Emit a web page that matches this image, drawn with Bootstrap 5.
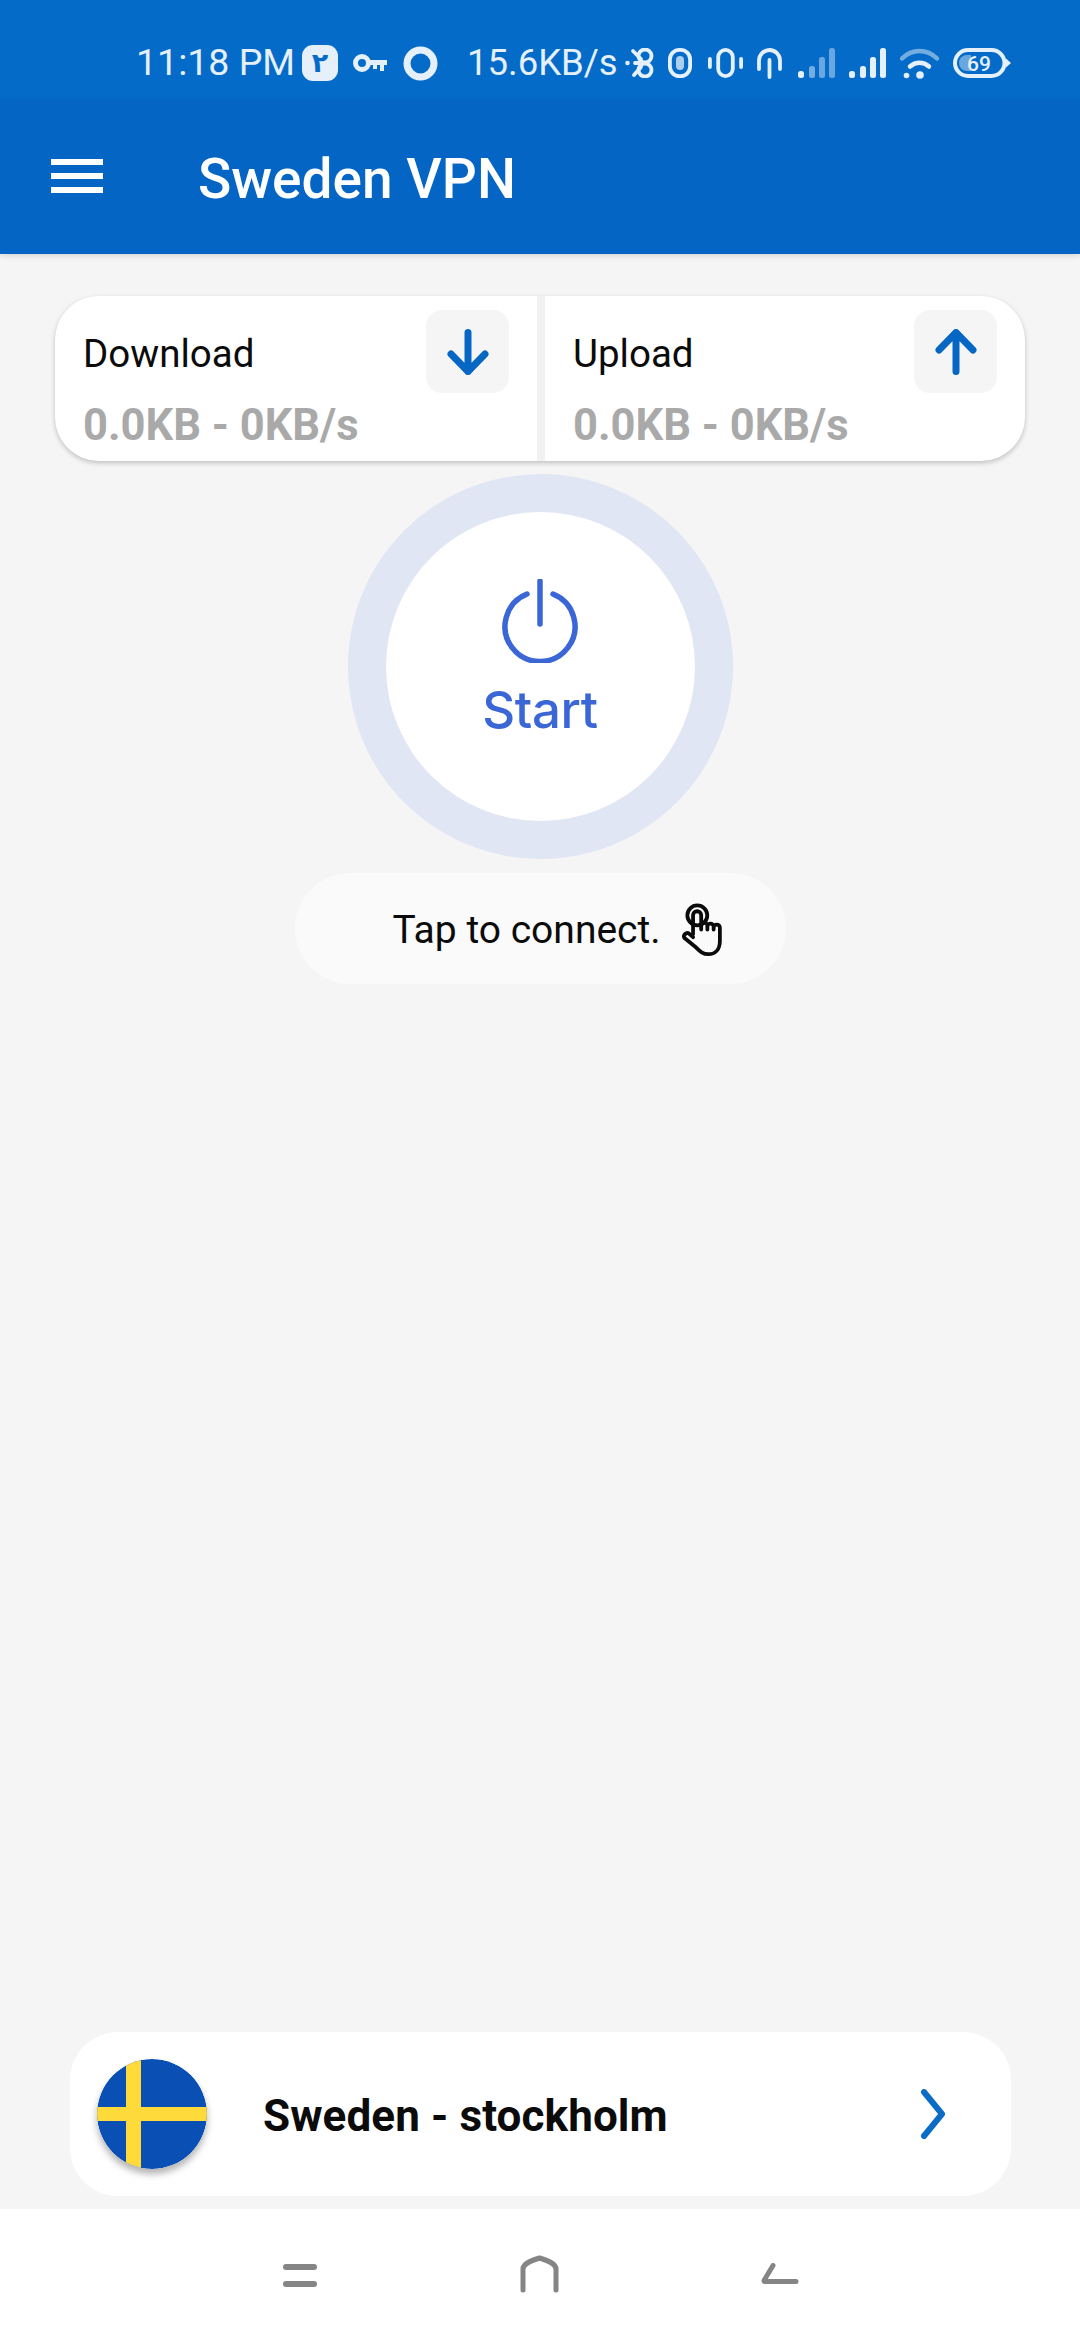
<!DOCTYPE html>
<html lang="en">
<head>
<meta charset="utf-8">
<title>Sweden VPN</title>
<link href="https://cdn.jsdelivr.net/npm/bootstrap@5.3.0/dist/css/bootstrap.min.css" rel="stylesheet">
<style>
html,body{margin:0;height:100%}
body{width:1080px;height:2340px;background:#f5f5f5;font-family:Roboto,"Liberation Sans",sans-serif;color:#0b0b0b;overflow:hidden}
.app-shell{height:2340px}
.status-strip{height:100px;background:#046bc9;padding-left:136px;padding-top:26px;color:#e6f0fa;font-size:37.5px;line-height:1}
.status-strip svg{flex:none;display:block}
.st-time{width:166px;white-space:nowrap}
.st-badge{width:36px;height:36px;border-radius:11px;background:#e6f0fa;color:#046bc9;font:700 27px/36px "DejaVu Sans",sans-serif;text-align:center}
.ms-15{margin-left:15px}.ms-16{margin-left:16px}.ms-14{margin-left:14px}.ms-29{margin-left:29px}.ms-8{margin-left:8px}.ms-20{margin-left:20px}
.st-speed{white-space:nowrap;width:150px;font-size:36.5px}
.app-bar{height:154px;background:#0465c4;color:#fff;padding-left:51px;box-shadow:0 2px 6px rgba(0,0,0,.12);position:relative}
.app-title{font-size:55px;font-weight:500;margin-left:95px;line-height:1;margin-top:5px}
.burger{width:52px;display:flex;flex-direction:column;gap:8px;margin-bottom:2px}
.burger span{display:block;height:6px;background:#fff}
.main-pane{padding-top:42px;min-height:0}
.stats-box{margin:0 55px;height:165px;border-radius:44px;background:#fff;box-shadow:0 2px 5px rgba(0,0,0,.22);overflow:hidden}
.stat-cell{width:482px;padding:14px 28px 0 28px;flex:none}
.stat-cell+.stat-cell{border-left:8px solid #f1f1f1;padding-left:28px;width:488px}
.stat-name{font-size:38.5px;line-height:1;padding-top:25px}
.stat-icon{width:83px;height:83px;background:#f5f5f5;border-radius:16px}
.stat-val{font-size:43.5px;line-height:1;font-weight:700;color:#a9a9a9;white-space:nowrap;margin-top:11px}
.ring-outer{width:385px;height:385px;border-radius:50%;background:#e0e6f3;margin:13px auto 0}
.ring-inner{width:309px;height:309px;border-radius:50%;background:#fff;color:#3b66d6;padding-top:67px}
.start-txt{font-family:Inter,Roboto,sans-serif;font-size:51px;font-weight:500;line-height:1;margin-top:21px;letter-spacing:-.4px}
.tap-pill{width:491px;height:111px;border-radius:56px;background:#fafafa;margin:14px auto 0;font-size:39px;padding-left:98px;padding-top:3px;white-space:nowrap}
.place-box{margin:auto 69px 13px 70px;height:164px;border-radius:48px;background:#fff;padding-left:27px;padding-right:65px}
.flag-disc{width:110px;height:110px;border-radius:50%;box-shadow:0 5px 7px rgba(0,0,0,.3);flex:none;display:block}
.place-name{font-size:44px;font-weight:700;margin-left:56px;white-space:nowrap;letter-spacing:.1px;margin-top:3px}
.sys-nav{height:131px;background:#fff;flex:none;position:relative}
.sys-nav svg{display:block;flex:none}
.nv-a{margin-left:283px;margin-bottom:53px}.nv-b{margin-left:203px;margin-bottom:47px}.nv-c{margin-left:202px;margin-bottom:56px}
</style>
</head>
<body>
<div class="app-shell d-flex flex-column">
  <div class="status-strip d-flex align-items-center flex-shrink-0">
    <span class="st-time">11:18 PM</span>
    <span class="st-badge">۲</span>
    <svg class="ms-15" width="34" height="20" viewBox="0 0 34 20"><circle cx="9" cy="10" r="6.5" fill="none" stroke="#e6f0fa" stroke-width="5"/><path d="M15 7h19v5h-3v6h-4v-6h-3v4h-4v-4h-5z" fill="#e6f0fa"/></svg>
    <svg class="ms-16" width="35" height="35" viewBox="0 0 35 35"><circle cx="17.5" cy="17.5" r="13.5" fill="none" stroke="#e6f0fa" stroke-width="7"/></svg>
    <span class="st-speed ms-29">15.6KB/s</span>
    <svg class="ms-8" width="29" height="30" viewBox="0 0 29 30" fill="none" stroke="#e6f0fa" stroke-width="3.8" stroke-linecap="round"><circle cx="20" cy="8" r="6.500"/><circle cx="20" cy="22" r="6.500"/><path d="M8 3l8 8M16 19l-7 8M14 15l-4 0"/><circle cx="2.5" cy="15" r="1" stroke-width="2.5"/></svg>
    <svg class="ms-14" width="24" height="30" viewBox="0 0 24 30"><rect x="1.9" y="1.9" width="20.200" height="26.200" rx="9.500" fill="none" stroke="#e6f0fa" stroke-width="3.8"/><rect x="8" y="8" width="8" height="14" rx="4" fill="#e6f0fa" opacity=".75"/></svg>
    <svg class="ms-16" width="35" height="30" viewBox="0 0 35 30"><rect x="10.200" y="1.900" width="14.600" height="26.200" rx="7.300" fill="none" stroke="#e6f0fa" stroke-width="3.800"/><rect x="0" y="9" width="3.800" height="12" rx="1.900" fill="#e6f0fa"/><rect x="31.200" y="9" width="3.800" height="12" rx="1.900" fill="#e6f0fa"/></svg>
    <svg class="ms-14" width="25" height="31" viewBox="0 0 25 31" fill="none" stroke="#e6f0fa" stroke-width="3.8" stroke-linecap="round"><path d="M2 21V12.500a10.500 10.500 0 0 1 21 0V21M12.500 12v17"/></svg>
    <svg class="ms-16" width="37" height="30" viewBox="0 0 37 30" fill="#e6f0fa"><rect x="0" y="23" width="6" height="7" rx="2.500"/><rect x="11" y="18" width="6" height="12" rx="2.500" opacity=".5"/><rect x="21" y="9" width="6" height="21" rx="2.500" opacity=".45"/><rect x="31" y="0" width="6" height="30" rx="2.500" opacity=".45"/></svg>
    <svg class="ms-14" width="37" height="30" viewBox="0 0 37 30" fill="#e6f0fa"><rect x="0" y="23" width="6" height="7" rx="2.500"/><rect x="11" y="18" width="6" height="12" rx="2.500"/><rect x="21" y="9" width="6" height="21" rx="2.500"/><rect x="31" y="0" width="6" height="30" rx="2.500"/></svg>
    <svg class="ms-14" width="39" height="31" viewBox="0 0 39 31" fill="none" stroke-linecap="round"><path d="M2 10.500C12 .5 27 .5 37 10.500" stroke="#e6f0fa" stroke-width="4.500" opacity=".5"/><path d="M10 18.500c5.500-5 13.500-5 19 0" stroke="#e6f0fa" stroke-width="4.500"/><circle cx="6.500" cy="27.500" r="2.800" fill="#e6f0fa"/><circle cx="20" cy="27" r="3.800" fill="#e6f0fa"/></svg>
    <svg class="ms-14" width="58" height="30" viewBox="0 0 58 30"><rect x="2" y="2" width="49.500" height="26" rx="13" fill="none" stroke="#e6f0fa" stroke-width="4"/><path d="M53 10.500l5 4.500-5 4.500z" fill="#e6f0fa"/><path d="M18 7h-4a8 8 0 0 0 0 16h4z" fill="#e6f0fa" opacity=".45"/><text x="26" y="22.500" text-anchor="middle" font-family="Roboto,sans-serif" font-size="21" font-weight="500" fill="#e6f0fa">69</text></svg>
  </div>
  <nav class="app-bar d-flex align-items-center flex-shrink-0">
    <div class="burger"><span></span><span></span><span></span></div>
    <div class="app-title">Sweden VPN</div>
  </nav>
  <main class="main-pane flex-grow-1 d-flex flex-column">
    <div class="stats-box d-flex flex-shrink-0">
      <div class="stat-cell">
        <div class="d-flex justify-content-between">
          <div class="stat-name">Download</div>
          <div class="stat-icon d-flex align-items-center justify-content-center">
            <svg width="42" height="46" viewBox="0 0 42 46" fill="none" stroke="#0566c4" stroke-width="7" stroke-linecap="round" stroke-linejoin="round"><path d="M21 3.500v39M4 25l17 17.500L38 25"/></svg>
          </div>
        </div>
        <div class="stat-val">0.0KB - 0KB/s</div>
      </div>
      <div class="stat-cell">
        <div class="d-flex justify-content-between">
          <div class="stat-name">Upload</div>
          <div class="stat-icon d-flex align-items-center justify-content-center">
            <svg width="42" height="46" viewBox="0 0 42 46" fill="none" stroke="#0566c4" stroke-width="7" stroke-linecap="round" stroke-linejoin="round"><path d="M21 42.500v-39M4 21L21 3.500 38 21"/></svg>
          </div>
        </div>
        <div class="stat-val">0.0KB - 0KB/s</div>
      </div>
    </div>
    <div class="ring-outer d-flex align-items-center justify-content-center flex-shrink-0">
      <div class="ring-inner d-flex flex-column align-items-center">
        <svg width="76" height="84" viewBox="0 0 76 84" fill="none" stroke="#3b66d6" stroke-width="5.500" stroke-linecap="round"><path d="M25 15a35 35 0 1 0 26 0"/><path d="M38 2v43"/></svg>
        <div class="start-txt">Start</div>
      </div>
    </div>
    <div class="tap-pill d-flex align-items-center flex-shrink-0">
      <span>Tap to connect.</span>
      <svg class="ms-20" width="44" height="55" viewBox="0 0 46 58" fill="none" stroke="#0b0b0b" stroke-width="4" stroke-linecap="round" stroke-linejoin="round"><circle cx="17" cy="13" r="10.500"/><path d="M12.500 33V13a4.300 4.300 0 0 1 8.600 0v15M21 27v-3a3.300 3.300 0 0 1 6.600 0v4M27.600 27v-2a3.300 3.300 0 0 1 6.600 0v3M34.200 28v-2a3.300 3.300 0 0 1 6.600 0v14c0 9-5 14-12 14-6 0-9-3-13-7L3.500 37c-2-3 2-7 5-4.500l4 3.500"/></svg>
    </div>
    <div class="place-box d-flex align-items-center flex-shrink-0">
      <svg class="flag-disc" viewBox="0 0 110 110"><defs><clipPath id="fc"><circle cx="55" cy="55" r="55"/></clipPath></defs><g clip-path="url(#fc)"><rect width="110" height="110" fill="#0a50b4"/><rect x="29" width="15" height="110" fill="#fedb3b"/><rect y="48" width="110" height="14" fill="#fedb3b"/></g></svg>
      <div class="place-name">Sweden - stockholm</div>
      <svg class="ms-auto" width="26" height="50" viewBox="0 0 26 50" fill="none" stroke="#0a6cc6" stroke-width="6" stroke-linecap="round" stroke-linejoin="round"><path d="M4 3l18 22L4 47"/></svg>
    </div>
  </main>
  <div class="sys-nav d-flex align-items-end">
    <svg class="nv-a" width="34" height="23" viewBox="0 0 34 23" fill="#858585"><rect width="34" height="6" rx="3"/><rect y="17" width="34" height="6" rx="3"/></svg>
    <svg class="nv-b" width="39" height="38" viewBox="0 0 39 38" fill="none" stroke="#858585" stroke-width="5" stroke-linecap="round" stroke-linejoin="round"><path d="M3 35V14C3 9 10 6 19.500 3 29 6 36 9 36 14v21"/></svg>
    <svg class="nv-c" width="38" height="21" viewBox="0 0 38 21" fill="none" stroke="#858585" stroke-width="5" stroke-linecap="round" stroke-linejoin="round"><path d="M12 2.500L3 17.500c0 .5 .5 1 1 1h31"/></svg>
  </div>
</div>
</body>
</html>
